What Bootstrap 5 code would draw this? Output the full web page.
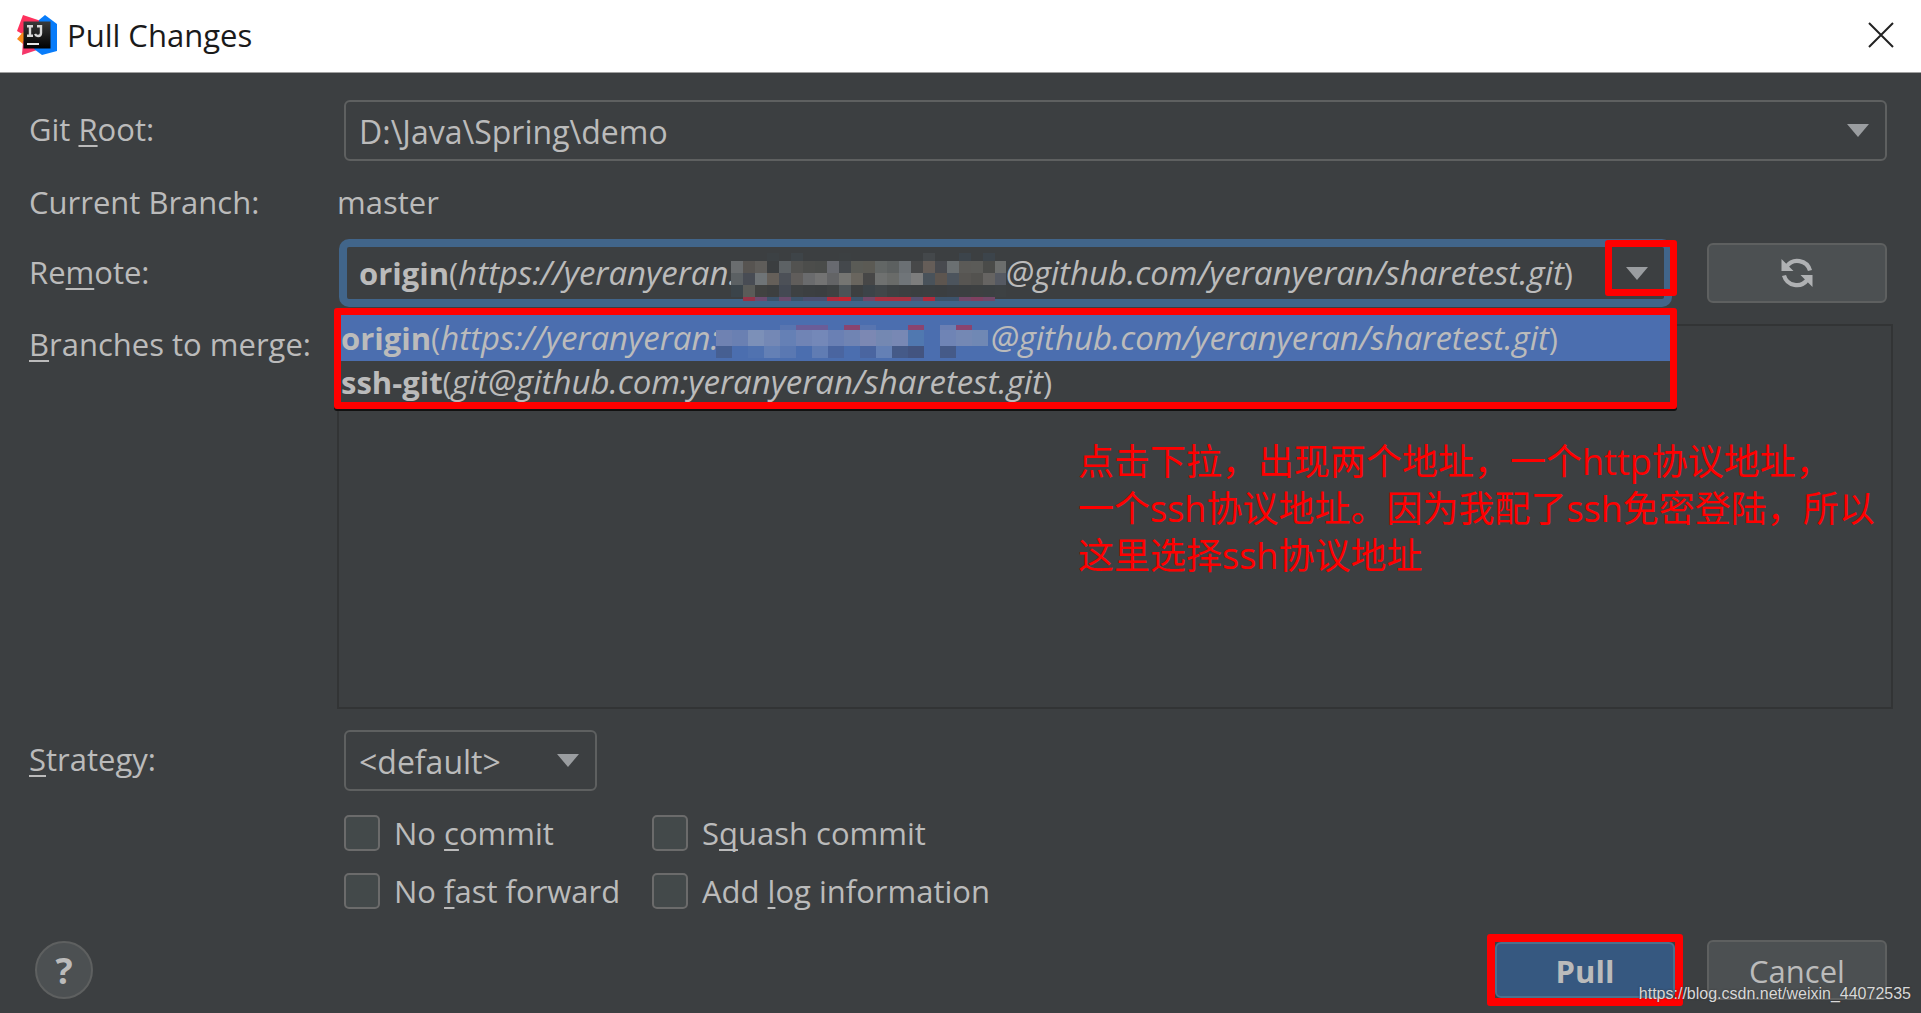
<!DOCTYPE html>
<html lang="en">
<head>
<meta charset="utf-8">
<meta name="viewport" content="width=device-width, initial-scale=1">
<title>Pull Changes</title>
<link href="https://cdn.jsdelivr.net/npm/bootstrap@5.3.0/dist/css/bootstrap.min.css" rel="stylesheet">
<style>
  :root { --ink: #bbbbbb; --panel: #3c3f41; --line: #5e6060; --alert: #ff0000; }
  body { font-family: "Open Sans", "Noto Sans CJK SC", sans-serif; font-size: 31px; line-height: 40px; color: var(--ink); background: var(--panel); }
  u { text-decoration-thickness: 2px; text-underline-offset: 4px; text-decoration-skip-ink: none; }

  .titlebar { height: 73px; padding: 0 26px 2px 17px; background: #fff; color: #1a1a1a; border-bottom: 1px solid #a0a0a0; }
  .titlebar h1 { font-size: 31px; line-height: 40px; font-weight: 400; margin: 0 0 0 10px; }
  .close-btn { width: 28px; height: 28px; }

  .dialog-body { padding: 27px 28px 7px 29px; }
  .field-label { flex: 0 0 308px; }
  label.field-label { padding-bottom: 3px; }
  .inset { padding: 0 6px 0 7px; }
  .master-row { margin: 21px 0 17px; }

  .dark-select {
    --bs-form-select-bg-img: url("data:image/svg+xml,%3csvg xmlns='http://www.w3.org/2000/svg' viewBox='0 0 22 13'%3e%3cpath fill='%239a9da0' d='M0 0h22L11 13z'/%3e%3c/svg%3e");
    height: 61px; padding: 2px 56px 0 13px; font-size: 32px; line-height: 40px;
    color: var(--ink); background-color: var(--panel); border: 2px solid var(--line); border-radius: 6px;
    background-size: 22px 13px; background-position: right 16px center;
  }
  .strategy-select { width: 253px; }

  .combo-wrap { margin-left: 2px; margin-right: 35px; }
  .remote-combo { height: 68px; padding: 0 0 0 12px; background: var(--panel); color: var(--ink); border: 8px solid #41658a; border-radius: 10px; }
  .arrow-frame { top: 1px; right: -5px; width: 72px; height: 56px; border: 7px solid var(--alert); border-radius: 3px; pointer-events: none; }
  .popup { top: 69px; left: -5px; right: -5px; z-index: 5; background: var(--panel); border: 7px solid var(--alert); border-radius: 3px; box-shadow: 0 2px 0 #111; margin: 0; padding: 0; list-style: none; }
  .popup li { height: 41px; }
  .popup li.picked { height: 46px; background: #4b6eaf; }
  .repo-text { white-space: nowrap; line-height: 40px; }
  .repo-text i { font-size: 33px; }
  .repo-text svg { flex: none; margin-left: -7px; }

  .dark-btn { width: 180px; height: 60px; padding: 0; font-size: 31px; line-height: 40px; color: var(--ink); background: #4c5052; border: 2px solid var(--line); border-radius: 6px; }
  .pull-frame { padding: 0; border: 8px solid var(--alert); border-radius: 3px; margin-right: 24px; }
  .pull-btn { height: 56px; background: #365880; border-color: #4c708c; font-weight: 700; }
  .dark-btn:hover { color: #fff; background: #585c5e; }
  .refresh-cell { padding-right: 6px; }

  .branch-row { margin: 17px 0 21px; }
  .branch-list { border: 2px solid #323435; padding: 112px 12px 0; }
  .branch-note { width: 801px; margin: 0; color: var(--alert); font-size: 36px; line-height: 47px; white-space: nowrap; }

  .option-grid { display: grid; grid-template-columns: 308px 1fr; row-gap: 22px; margin-top: 24px; padding-left: 315px; }
  .option-grid .form-check { min-height: 36px; padding: 0; margin: 0; }
  .option-grid .form-check-input { float: none; flex: none; width: 36px; height: 36px; margin: 0 14px 0 0; background-color: #43494a; border: 2px solid #6b6b6b; border-radius: 5px; }
  .option-grid label { line-height: 36px; white-space: nowrap; }

  .dialog-footer { margin-top: 25px; padding: 0 6px; }
  .dialog-footer .dark-btn, .help-btn { padding-top: 2px; }
  .help-btn { width: 58px; height: 58px; font-size: 36px; line-height: 40px; font-weight: 700; color: var(--ink); background: #4c5052; border: 2px solid var(--line); }
  .watermark { right: 10px; bottom: 7px; font-family: "Liberation Sans", sans-serif; font-size: 16px; line-height: 24px; color: #d8d8d8; text-decoration: none; text-shadow: 0 0 2px #333; }
</style>
</head>
<body class="min-vh-100 d-flex flex-column position-relative">

<header class="titlebar d-flex align-items-center">
  <svg width="40" height="40" viewBox="0 0 40 40" aria-hidden="true">
    <defs><linearGradient id="plate" x2="0" y2="1"><stop stop-color="#3a3a3a"/><stop offset="1" stop-color="#000"/></linearGradient></defs>
    <path fill="#fe315d" d="M6 0 24 6 14 24 0 16z"/>
    <path fill="#f98a1a" d="M6 17 0 24 6 29 14 22z"/>
    <path fill="#f5376a" d="M6 26 16 26 20 35 5 40z"/>
    <path fill="#087cfa" d="M28 0 40 9V36L25 40 17 34 22 5z"/>
    <path fill="url(#plate)" d="M6.500 6.500h27v27h-27z"/>
    <path fill="none" stroke="#d8d8d8" stroke-width="2.400" d="M10 11.200h6M13 11v10M10 20.800h6M20 11.200h4V18c0 2-1 3-3 3s-2.500-1-3-2"/>
    <path fill="#e8e8e8" d="M10 28h12v2H10z"/>
  </svg>
  <h1>Pull Changes</h1>
  <button type="button" class="close-btn btn p-0 border-0 ms-auto d-flex align-items-center justify-content-center" aria-label="Close">
    <svg width="26" height="26" viewBox="0 0 26 26"><path d="M1 1 25 25M25 1 1 25" stroke="#222" stroke-width="2"/></svg>
  </button>
</header>

<main class="dialog-body d-flex flex-column flex-grow-1">
  <div class="d-flex align-items-center">
    <label class="field-label" for="gitRoot">Git <u>R</u>oot:</label>
    <div class="inset flex-grow-1">
      <select id="gitRoot" class="form-select dark-select"><option>D:\Java\Spring\demo</option></select>
    </div>
  </div>

  <div class="master-row d-flex">
    <span class="field-label">Current Branch:</span>
    <span>master</span>
  </div>

  <div class="d-flex align-items-center">
    <label class="field-label" for="remote">Re<u>m</u>ote:</label>
    <div class="combo-wrap position-relative flex-grow-1">
      <button type="button" id="remote" role="combobox" aria-expanded="true" aria-controls="remoteList" class="remote-combo w-100 d-flex align-items-center text-start">
        <span class="repo-text d-flex align-items-center"><b>origin</b>(<i>https://yeranyeran:</i><svg id="mosaicDark" width="276" height="58" aria-hidden="true"></svg><i>@github.com/yeranyeran/sharetest.git</i>)</span>
        <svg class="ms-auto me-3" width="22" height="13" viewBox="0 0 22 13" aria-hidden="true"><path fill="#9a9da0" d="M0 0h22L11 13z"/></svg>
      </button>
      <div class="arrow-frame position-absolute"></div>
      <ul id="remoteList" role="listbox" class="popup position-absolute">
        <li role="option" aria-selected="true" class="picked repo-text d-flex align-items-center"><b>origin</b>(<i>https://yeranyeran:</i><svg id="mosaicBlue" width="279" height="46" aria-hidden="true"></svg><i>@github.com/yeranyeran/sharetest.git</i>)</li>
        <li role="option" aria-selected="false" class="repo-text d-flex align-items-center"><b>ssh-git</b>(<i>git@github.com:yeranyeran/sharetest.git</i>)</li>
      </ul>
    </div>
    <div class="refresh-cell">
      <button type="button" class="dark-btn d-flex align-items-center justify-content-center" aria-label="Refresh remotes">
        <svg width="32" height="32" viewBox="0 0 32 32" fill="none" stroke="#afb1b3" stroke-width="4.200">
          <path d="M29 13.500A13.200 13.200 0 0 0 5.500 9.500M3 18.500A13.200 13.200 0 0 0 26.500 22.500"/>
          <path fill="#afb1b3" stroke="none" d="M.5 2V14H12.500zM31.500 30V18H19.500z"/>
        </svg>
      </button>
    </div>
  </div>

  <div class="branch-row d-flex flex-grow-1">
    <span class="field-label" id="branchLabel"><u>B</u>ranches to merge:</span>
    <div class="branch-list flex-grow-1 d-flex justify-content-end" role="group" aria-labelledby="branchLabel">
      <p class="branch-note">点击下拉，出现两个地址，一个http协议地址，<br>一个ssh协议地址。因为我配了ssh免密登陆，所以<br>这里选择ssh协议地址</p>
    </div>
  </div>

  <div class="d-flex align-items-center">
    <label class="field-label" for="strategy"><u>S</u>trategy:</label>
    <div class="inset">
      <select id="strategy" class="form-select dark-select strategy-select"><option>&lt;default&gt;</option></select>
    </div>
  </div>

  <div class="option-grid">
    <div class="form-check d-flex"><input class="form-check-input" type="checkbox" id="noCommit"><label for="noCommit">No <u>c</u>ommit</label></div>
    <div class="form-check d-flex"><input class="form-check-input" type="checkbox" id="squash"><label for="squash">S<u>q</u>uash commit</label></div>
    <div class="form-check d-flex"><input class="form-check-input" type="checkbox" id="noFf"><label for="noFf">No <u>f</u>ast forward</label></div>
    <div class="form-check d-flex"><input class="form-check-input" type="checkbox" id="addLog"><label for="addLog">Add <u>l</u>og information</label></div>
  </div>

  <footer class="dialog-footer d-flex align-items-center">
    <button type="button" class="help-btn rounded-circle" aria-label="Help">?</button>
    <div class="pull-frame ms-auto d-flex"><button type="button" class="dark-btn pull-btn">Pull</button></div>
    <button type="button" class="dark-btn">Cancel</button>
  </footer>
</main>

<a class="watermark position-absolute" href="https://blog.csdn.net/weixin_44072535">https://blog.csdn.net/weixin_44072535</a>

<script src="https://cdn.jsdelivr.net/npm/bootstrap@5.3.0/dist/js/bootstrap.bundle.min.js"></script>
<script>
  // Censored user names: each row is [y, height, colours...], "-" leaves a cell empty.
  function mosaic(id, x0, cell, rows) {
    const svg = document.getElementById(id);
    rows.forEach(([y, h, colours]) => colours.split(' ').forEach((c, i) => {
      if (c === '-') return;
      const r = document.createElementNS('http://www.w3.org/2000/svg', 'rect');
      r.setAttribute('x', x0 + i * cell); r.setAttribute('y', y);
      r.setAttribute('width', cell); r.setAttribute('height', h);
      r.setAttribute('fill', '#' + c);
      svg.appendChild(r);
    }));
  }
  mosaic('mosaicDark', 1, 12, [
    [9, 8, '- - - 3c4144 - 3e4448 - - - 3c4042 - - - - - - 44484b - - 3c444b - 3c444b -'],
    [17, 12, '6a6d6f 575451 5f5d5a 3b3e40 5d6265 525250 4c4d4b 4a4c4a 686a70 44484c 5a5b56 5b5a54 626665 5c6060 6b7074 474849 655d58 484a4f 6b7072 5b5a57 5b5b58 4a4b49 6c6e6d'],
    [29, 12, '5b6063 484c54 6f7477 655f59 4c5057 605d5b 6a6b6d 737373 636466 757572 69655e 474747 6f7170 696b69 707579 7d7d7d 49525a 5d554f 4c545d 575552 53524f 666462 555962'],
    [41, 12, '3b444a 5a5b58 414241 3d3f40 444953 3e4143 3c3f41 3b3e40 3e4142 4d5357 3d3f40 3c4348 414649 3d4143 3c3f41 3b3e40 3b3f41 3b3e40 3b3f43 3c3f41 3d4041 3c4042 3d4143'],
    [53, 4, '- 963348 6d4b70 3d536b 6a4b6c 3d536b 4c5070 4c5070 b02a3c c42430 3d536b 724868 a83040 a83040 a83040 565070 b02a3c 3d536b 3d536b 724868 804060 724868 -']
  ]);
  mosaic('mosaicBlue', 4, 16, [
    [10, 5, '- - - - 5875b0 6a5d98 6a5d98 - 8a4470 5875b0 - - 8a4470 - 6a7fb3 8a4470 -'],
    [15, 16, '6f82b2 6a80b2 7c90b8 7488b5 6580b5 7084b5 7488b8 6a80b4 7084b3 7c88b3 7488b2 7888b4 5078b0 4b6eaf 6f84b5 7488b4 7088b4'],
    [31, 12, '465f92 4b6eaf 5072b0 6480b5 5a78b2 4b6eaf 607cb3 4a65a0 4b6eaf 4a65a0 6480b5 455a88 435480 4b6eaf 455a88 4b6eaf 4b6eaf']
  ]);
</script>
</body>
</html>
